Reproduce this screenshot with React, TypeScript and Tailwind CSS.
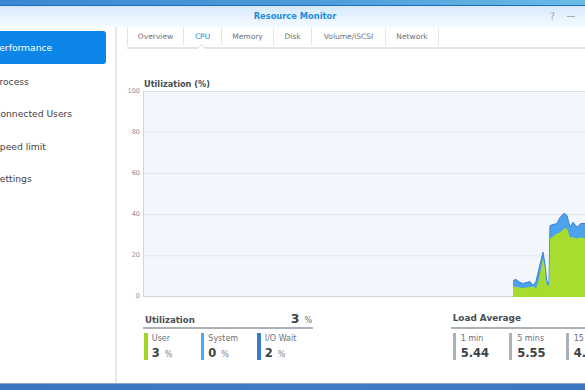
import React from "react";

const green: [number, number][] = [
  [513, 286], [520, 287], [523, 287.5], [530, 286.5], [533, 286], [536, 288], [539, 279], [541, 268], [543, 258], [545, 268], [546, 280], [547, 285], [549, 285], [550, 238], [557, 233], [560, 232], [564, 228], [567, 228], [570, 236.7], [573, 236.7], [577, 238], [581, 236.7], [585, 238], [605, 237],
];
const blue: [number, number][] = [
  [513, 280], [516, 279], [520, 282], [523, 283], [530, 281], [533, 285], [536, 281], [539, 268], [543, 251.7], [545, 264], [546, 273], [547, 281.7], [549, 281.7], [550, 225], [557, 223], [560, 217], [564, 212.7], [567, 215], [570, 226.7], [573, 221.7], [577, 226.7], [581, 223], [585, 223], [605, 222],
];
const OX = 143;
const OY = 90.5;
const BOTTOM = 296.5 - OY;
const toPts = (arr: [number, number][]) => arr.map(([x, y]) => `${x - OX},${y - OY}`).join(" ");
const area = (arr: [number, number][]) => `${arr[0][0] - OX},${BOTTOM} ${toPts(arr)} ${arr[arr.length - 1][0] - OX},${BOTTOM}`;

function Chart() {
  const grid = [41.2, 82.4, 123.6, 164.8];
  return (
    <div className="flex-1 h-[206px] overflow-hidden">
      <svg width="480" height="206" className="block">
        <rect x="0" y="0" width="480" height="206" fill="#f3f7fd" />
        {grid.map((g) => (
          <line key={g} x1="0" x2="480" y1={g} y2={g} stroke="#e1e6ed" strokeWidth="1" />
        ))}
        <line x1="0" x2="480" y1="0.5" y2="0.5" stroke="#d6dce4" strokeWidth="1" />
        <line x1="0" x2="480" y1="205.5" y2="205.5" stroke="#cfd5dd" strokeWidth="1" />
        <line x1="0.5" x2="0.5" y1="0" y2="206" stroke="#cfd5dd" strokeWidth="1" />
        <polygon points={area(blue)} fill="#4aa3ec" />
        <polyline points={toPts(blue)} fill="none" stroke="#3a80d2" strokeWidth="1" />
        <polygon points={area(green)} fill="#a8dc2e" />
      </svg>
    </div>
  );
}

function Stat({ color, label, value }: { color: string; label: string; value: string }) {
  return (
    <div className="w-[56.5px] flex gap-[4px] pl-[1.3px] shrink-0">
      <div className={`w-[3.5px] h-[27px] ${color}`} />
      <div className="flex flex-col">
        <div className="text-[8px] leading-[10px] mt-[1.5px] text-[#6a7078] whitespace-nowrap">{label}</div>
        <div className="flex items-baseline mt-[2.5px] whitespace-nowrap">
          <span className="text-[11.5px] leading-[13px] font-bold text-[#3c4247]">{value}</span>
          <span className="text-[8px] ml-[5px] text-[#7a8088]">%</span>
        </div>
      </div>
    </div>
  );
}

function Load({ label, value }: { label: string; value: string }) {
  return (
    <div className="w-[56.5px] flex gap-[5px] pl-[1.7px] shrink-0">
      <div className="w-[3px] h-[27px] bg-[#a9b0b7]" />
      <div className="flex flex-col">
        <div className="text-[8px] leading-[10px] mt-[1.5px] text-[#6a7078] whitespace-nowrap">{label}</div>
        <div className="text-[11.5px] leading-[13px] mt-[2.5px] font-bold text-[#3c4247] whitespace-nowrap">{value}</div>
      </div>
    </div>
  );
}

export default function App() {
  const tabs = [
    { t: "Overview", w: "w-[57px]" },
    { t: "CPU", w: "w-[38px]" },
    { t: "Memory", w: "w-[52px]" },
    { t: "Disk", w: "w-[38px]" },
    { t: "Volume/iSCSI", w: "w-[74px]" },
    { t: "Network", w: "w-[53px]" },
  ];
  const side = ["Performance", "Process", "Connected Users", "Speed limit", "Settings"];
  return (
    <div className="w-[585px] h-[390px] overflow-hidden flex flex-col bg-white font-['DejaVu_Sans',sans-serif]">
      <div className="h-[6px] shrink-0 bg-gradient-to-r from-[#3a88d2] via-[#4a9ad9] to-[#6abbe6] border-b border-[#1f6ec6]" />
      <div className="flex-1 min-h-0 flex flex-col ml-[-20px] w-[630px]">
        <div className="h-[21px] shrink-0 grid grid-cols-[1fr_auto_1fr] items-center bg-gradient-to-b from-[#d6eafd] to-[#f6fbff]">
          <div />
          <div className="text-[8.3px] font-bold text-[#1c8ce2]">Resource Monitor</div>
          <div className="flex justify-end items-center gap-[12px] pr-[35px]">
            <span className="text-[10px] leading-none text-[#a3abb3]">?</span>
            <div className="w-[8px] h-[1.5px] bg-[#a3abb3]" />
          </div>
        </div>
        <div className="flex-1 min-h-0 flex">
          <div className="w-[137px] shrink-0 border-r-2 border-[#e6e8ea] pt-[4px] pl-[9px] pr-[9px]">
            {side.map((s, i) => (
              <div
                key={s}
                className={`h-[32.5px] flex items-center pl-[5px] text-[9.2px] whitespace-nowrap ${
                  i === 0 ? "bg-[#0b86e8] text-white rounded-[3px] pt-[1px]" : "text-[#3e4348] pt-[4px]"
                }`}
              >
                {s}
              </div>
            ))}
          </div>
          <div className="flex-1 min-w-0 pl-[10px] flex flex-col">
            <div className="h-[22px] shrink-0 border-b-2 border-[#e0e4e8] flex items-start pt-[1px]">
              {tabs.map((t, i) => (
                <div
                  key={t.t}
                  className={`${t.w} h-[17px] relative flex items-center justify-center text-[7.5px] border-r border-[#e2e5e8] ${
                    i === 0 ? "border-l" : ""
                  } ${i === 1 ? "text-[#1a8ae0]" : "text-[#6b737b]"}`}
                >
                  {t.t}
                  {i === 1 && (
                    <svg width="9" height="5" className="absolute left-[13px] top-[16px]">
                      <polygon points="0,5 4.5,0.5 9,5" fill="white" />
                      <polyline points="0,4.5 4.5,0.5 9,4.5" fill="none" stroke="#d6dbe0" strokeWidth="1" />
                    </svg>
                  )}
                </div>
              ))}
            </div>
            <div className="mt-[30px] pl-[17px] text-[8.2px] leading-[10px] font-bold text-[#484d52]">Utilization (%)</div>
            <div className="mt-[1.5px] flex items-start gap-[3px]">
              <div className="w-[13px] h-[214px] mt-[-4px] flex flex-col justify-between items-end text-[6.5px] leading-[8px] text-[#8c9198]">
                {["100", "80", "60", "40", "20", "0"].map((l) => (
                  <span key={l}>{l}</span>
                ))}
              </div>
              <Chart />
            </div>
            <div className="mt-[12px] pl-[16px] flex gap-[138px]">
              <div className="w-[170px] shrink-0">
                <div className="h-[16px] border-b-2 border-[#a9b1b9] flex items-baseline justify-between pl-[2px] pr-[1px] pt-[0.5px]">
                  <span className="text-[8.6px] leading-[11px] font-bold text-[#484d52]">Utilization</span>
                  <span className="flex items-baseline">
                    <span className="text-[12.5px] leading-[11px] font-bold text-[#3c4247]">3</span>
                    <span className="text-[8px] ml-[5px] text-[#6a7078]">%</span>
                  </span>
                </div>
                <div className="mt-[4px] flex">
                  <Stat color="bg-[#a2d52a]" label="User" value="3" />
                  <Stat color="bg-[#4cabf0]" label="System" value="0" />
                  <Stat color="bg-[#3a7dcc]" label="I/O Wait" value="2" />
                </div>
              </div>
              <div className="w-[200px] shrink-0">
                <div className="h-[16px] border-b-2 border-[#a9b1b9] flex items-baseline pl-[1.7px] pt-[0.5px]">
                  <span className="text-[8.9px] leading-[11px] font-bold text-[#484d52]">Load Average</span>
                </div>
                <div className="mt-[4px] flex">
                  <Load label="1 min" value="5.44" />
                  <Load label="5 mins" value="5.55" />
                  <Load label="15 mins" value="4.91" />
                </div>
              </div>
            </div>
          </div>
        </div>
      </div>
      <div className="h-[7px] shrink-0 border-t border-[#86a6ca] bg-gradient-to-r from-[#3a76bf] via-[#3f7cc4] to-[#3a78c2]" />
    </div>
  );
}
